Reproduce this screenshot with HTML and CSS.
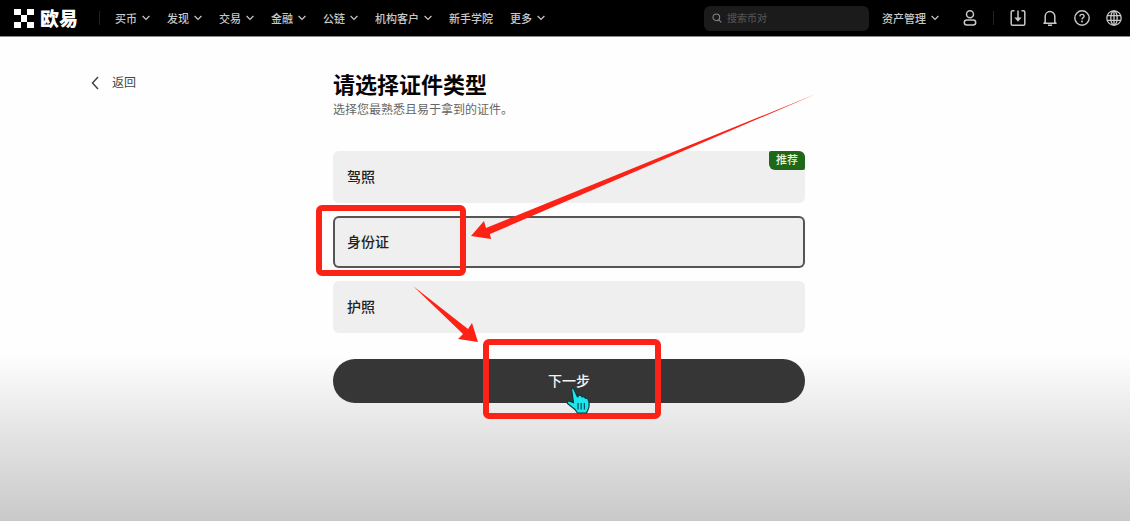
FILE: index.html
```html
<!DOCTYPE html>
<html lang="zh-CN">
<head>
<meta charset="utf-8">
<meta name="viewport" content="width=device-width, initial-scale=1">
<title>请选择证件类型</title>
<link rel="stylesheet" href="styles.css">
</head>
<body>
<svg width="0" height="0" class="sprite" aria-hidden="true">
  <symbol id="chev" viewBox="0 0 8 6"><path d="M.6 1 4 4.400 7.400 1" fill="none" stroke="currentColor" stroke-width="1.200"/></symbol>
</svg>
<header class="topbar">
  <a class="brand" href="#">
    <svg class="brand-mark" viewBox="0 0 20 20" aria-hidden="true"><path d="M0 0h7v6H0zM13 0h7v6h-7zM7 6h6v7H7zM0 13h7v6H0zM13 13h7v6h-7z" fill="#fff"/></svg>
    <span>欧易</span>
  </a>
  <span class="divider"></span>
  <nav class="menu">
    <a href="#">买币<svg class="chev"><use href="#chev"/></svg></a>
    <a href="#">发现<svg class="chev"><use href="#chev"/></svg></a>
    <a href="#">交易<svg class="chev"><use href="#chev"/></svg></a>
    <a href="#">金融<svg class="chev"><use href="#chev"/></svg></a>
    <a href="#">公链<svg class="chev"><use href="#chev"/></svg></a>
    <a href="#">机构客户<svg class="chev"><use href="#chev"/></svg></a>
    <a href="#">新手学院</a>
    <a href="#">更多<svg class="chev"><use href="#chev"/></svg></a>
  </nav>
  <label class="search">
    <svg viewBox="0 0 12 12" aria-hidden="true"><circle cx="5.200" cy="5.200" r="4" fill="none" stroke="currentColor" stroke-width="1.300"/><path d="m8.200 8.200 3 3" stroke="currentColor" stroke-width="1.300"/></svg>
    <input type="search" placeholder="搜索币对" aria-label="搜索币对">
  </label>
  <a class="assets" href="#">资产管理<svg class="chev"><use href="#chev"/></svg></a>
  <button class="icon user" type="button" aria-label="账户"><svg viewBox="0 0 16 18"><g fill="none" stroke="currentColor" stroke-width="1.500"><circle cx="8" cy="5.200" r="3.500"/><rect x="2.300" y="11" width="11.400" height="5" rx="2.500"/></g></svg></button>
  <span class="divider"></span>
  <div class="icons">
    <button class="icon" type="button" aria-label="下载"><svg viewBox="0 0 16 18"><g fill="none" stroke="currentColor" stroke-width="1.500"><path d="M4.500 1.800H2.500Q1.200 1.800 1.200 3.100v11.800q0 1.300 1.300 1.300h11q1.300 0 1.300-1.300V3.100q0-1.300-1.300-1.300h-2"/><path d="M8 1.500v9"/></g><path d="M4.300 8.500h7.400L8 12.700z" fill="currentColor"/></svg></button>
    <button class="icon" type="button" aria-label="通知"><svg viewBox="0 0 16 18"><path d="M3.200 13V7.300a4.800 4.800 0 0 1 9.600 0V13l1.200 1.200H2zM6 16.200h4" fill="none" stroke="currentColor" stroke-width="1.500" stroke-linejoin="round"/></svg></button>
    <button class="icon" type="button" aria-label="帮助"><svg viewBox="0 0 16 18"><g fill="none" stroke="currentColor" stroke-width="1.400"><circle cx="8" cy="9" r="7.200"/><path d="M5.900 7.400q.1-2 2.100-2t2.100 1.800q0 1.100-1.200 1.700-.9.500-.9 1.600"/></g><circle cx="8" cy="12.600" r="1" fill="currentColor"/></svg></button>
    <button class="icon" type="button" aria-label="语言"><svg viewBox="0 0 16 18"><g fill="none" stroke="currentColor" stroke-width="1.300"><circle cx="8" cy="9" r="7.200"/><ellipse cx="8" cy="9" rx="3.200" ry="7.200"/><path d="M8 1.800v14.400M1.300 6.700h13.400M1.300 11.300h13.400"/></g></svg></button>
  </div>
</header>
<main class="page">
  <a class="back" href="#"><svg viewBox="0 0 8 14" aria-hidden="true"><path d="M7 1 1.500 7 7 13" fill="none" stroke="currentColor" stroke-width="1.500"/></svg>返回</a>
  <form class="form">
    <h1>请选择证件类型</h1>
    <p class="hint">选择您最熟悉且易于拿到的证件。</p>
    <div class="options">
      <label class="option"><input type="radio" name="doc" value="license">驾照<span class="badge">推荐</span></label>
      <label class="option"><input type="radio" name="doc" value="id" checked>身份证<span class="mark mark-id"></span></label>
      <label class="option"><input type="radio" name="doc" value="passport">护照</label>
    </div>
    <button class="next" type="button">下一步<span class="mark mark-next"></span>
      <svg class="hand" viewBox="0 0 26 28" aria-hidden="true"><path d="M5.500 1.500Q7.500.5 8.500 3.500L11.500 10l1.500-1.800q1.800-.6 2.500.9l.6.900q1.700-1 2.700.5l.5.800q2-.7 2.900 1.200 1.900 5 .1 9.500L20.500 26h-9L9 22.500 1.500 16.500Q.5 14.300 3 14l4.500 1.800z" fill="#1fe6ec" stroke="#073a40" stroke-width="1.200" stroke-linejoin="round"/><path d="M12 16v6.500M15.200 16v6.500M18.400 16v6.500" stroke="#07545c" stroke-width="1.300"/></svg>
    </button>
    <svg class="arrows" viewBox="0 0 500 280" aria-hidden="true"><path d="M483 23 157 163 158 168 138 165 151 150 153 157Z" fill="#fc2316"/><path d="M80 215 135 258 139 252 145 271 125 268 130 263Z" fill="#fc2316"/></svg>
  </form>
</main>
</body>
</html>
```
FILE: styles.css
```css
* { box-sizing: border-box; }

body {
  margin: 0;
  min-height: 100vh;
  font-family: "Liberation Sans", "Noto Sans CJK SC", sans-serif;
  color: #222;
  background: linear-gradient(#fefefe 0, #fefefe 68%, #e9e9e9 80%, #c9c9c9 100%) no-repeat;
}

a { color: inherit; text-decoration: none; }
button { border: 0; padding: 0; font: inherit; color: inherit; cursor: pointer; }
svg { display: block; }
.sprite { position: absolute; }

.topbar {
  display: flex;
  align-items: center;
  height: 37px;
  padding: 0 8px 0 14px;
  background: #000;
  border-bottom: 1px solid #8a8a8a;
  color: #c8c8c8;
  font-size: 11px;
  font-weight: 500;
  white-space: nowrap;
}

.brand {
  display: flex;
  align-items: center;
  gap: 6px;
  padding-bottom: 2px;
  color: #fff;
  font-size: 19px;
  font-weight: 900;
}
.brand-mark { width: 20px; height: 20px; margin-top: 3px; }

.divider { width: 1px; height: 14px; background: #222; }
.brand + .divider { margin: 0 15px 0 21px; }

.menu { display: flex; gap: 17px; }
.menu a, .assets { display: flex; align-items: center; gap: 5px; }
.chev { width: 8px; height: 6px; }

.search {
  display: flex;
  align-items: center;
  gap: 5px;
  width: 165px;
  height: 25px;
  margin-left: auto;
  padding: 0 8px;
  border-radius: 6px;
  background: #1b1b1b;
  color: #858585;
}
.search svg { flex: none; width: 10px; height: 10px; }
.search input {
  flex: 1;
  min-width: 0;
  padding: 0;
  border: 0;
  outline: 0;
  background: none;
  color: #ddd;
  font: inherit;
  font-size: 10px;
}
.search input::placeholder { color: #505050; opacity: 1; }

.assets { margin-left: 13px; }
.icon { background: none; color: #c8c8c8; }
.icon svg { width: 16px; height: 18px; }
.user { margin: 0 15px 0 23px; }
.icons { display: flex; gap: 16px; margin-left: 16px; }

.page {
  display: grid;
  grid-template-columns: 1fr minmax(0, 472px) 1fr;
  align-items: start;
  padding: 34px 83px 40px 91px;
}

.back {
  display: flex;
  align-items: center;
  gap: 13px;
  padding-top: 3px;
  color: #444;
  font-size: 12px;
  line-height: 18px;
}
.back svg { width: 8px; height: 14px; }

.form { position: relative; }
h1 {
  margin: 0;
  color: #050505;
  font-size: 22px;
  line-height: 30px;
  font-weight: 700;
}
.hint {
  margin: 0;
  color: #666;
  font-size: 12px;
  line-height: 18px;
}

.options { display: grid; gap: 13px; margin: 32px 0 26px; }
.option {
  position: relative;
  display: flex;
  align-items: center;
  height: 52px;
  padding: 0 14px 2px;
  border-radius: 6px;
  background: #efefef;
  font-size: 14px;
  font-weight: 500;
}
.option:has(:checked) { box-shadow: inset 0 0 0 2px #555; }
.option input { position: absolute; opacity: 0; }

.badge {
  position: absolute;
  top: 0;
  right: 0;
  padding: 0 7px;
  border-radius: 2px 6px 2px 6px;
  background: #206818;
  color: #e4f2e0;
  font-size: 11px;
  line-height: 19px;
}

.next {
  position: relative;
  display: block;
  width: 100%;
  height: 44px;
  padding-bottom: 2px;
  border-radius: 22px;
  background: #363636;
  color: #f2f2f2;
  font-size: 14px;
  font-weight: 500;
}

.mark {
  position: absolute;
  z-index: 1;
  border: 6px solid #fc2316;
  border-radius: 6px;
}
.mark-id { left: -17px; top: -11px; width: 150px; height: 71px; }
.mark-next { left: 150px; top: -20px; width: 178px; height: 80px; }

.hand {
  position: absolute;
  z-index: 2;
  left: 233px;
  top: 28px;
  width: 26px;
  height: 28px;
}

.arrows {
  position: absolute;
  z-index: 2;
  left: 0;
  top: 0;
  width: 500px;
  height: 280px;
  overflow: visible;
  pointer-events: none;
}
```
